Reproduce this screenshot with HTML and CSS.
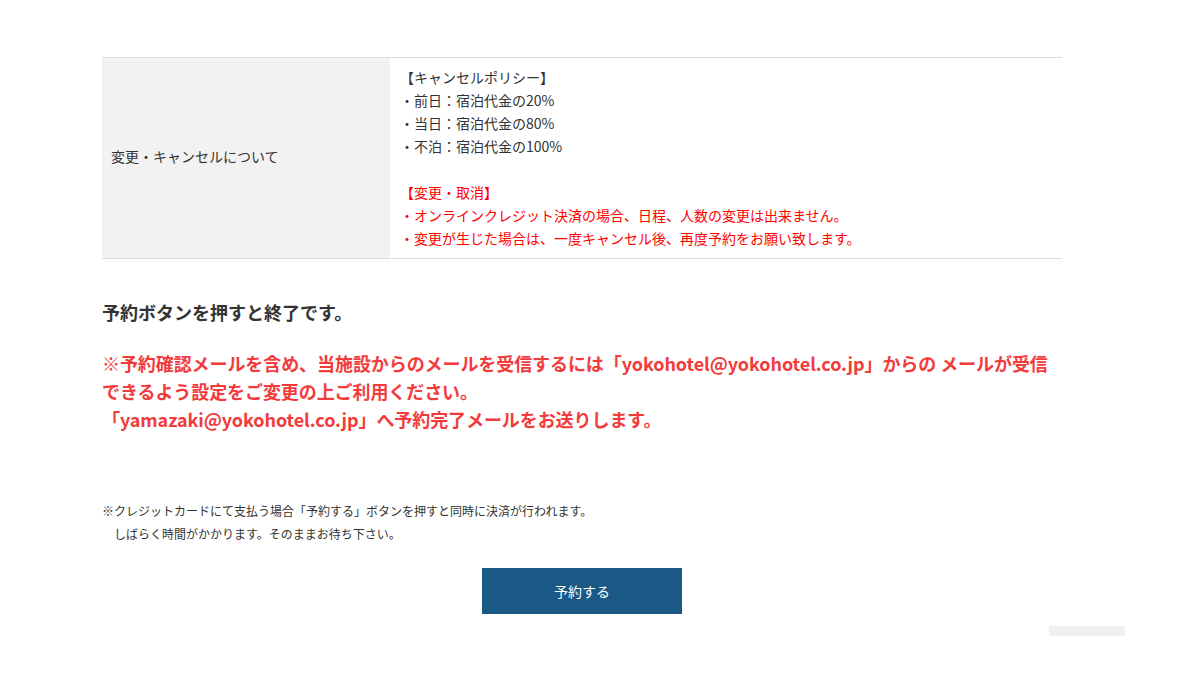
FILE: index.html
```html
<!DOCTYPE html>
<html lang="ja">
<head>
  <meta charset="UTF-8" />
  <meta name="viewport" content="width=device-width, initial-scale=1.0"/>
  <title>予約内容の確認</title>
  <link rel="stylesheet" href="styles.css">
</head>
<body>
  <div class="wrap">
    <!-- キャンセルポリシー -->
    <table class="policy">
      <tr>
        <th>変更・キャンセルについて</th>
        <td>
          【キャンセルポリシー】<br>
          ・前日：宿泊代金の20%<br>
          ・当日：宿泊代金の80%<br>
          ・不泊：宿泊代金の100%<br>
          <br>
          <span class="red">【変更・取消】<br>
          ・オンラインクレジット決済の場合、日程、人数の変更は出来ません。<br>
          ・変更が生じた場合は、一度キャンセル後、再度予約をお願い致します。</span>
        </td>
      </tr>
    </table>

    <p class="lead">予約ボタンを押すと終了です。</p>

    <p class="alert">※予約確認メールを含め、当施設からのメールを受信するには「yokohotel@yokohotel.co.jp」からの メールが受信<br>できるよう設定をご変更の上ご利用ください。<br>「yamazaki@yokohotel.co.jp」へ予約完了メールをお送りします。</p>

    <p class="note">※クレジットカードにて支払う場合「予約する」ボタンを押すと同時に決済が行われます。<br>　しばらく時間がかかります。そのままお待ち下さい。</p>

    <div class="btn-area">
      <button type="submit" class="btn-reserve">予約する</button>
    </div>
  </div>

  <!-- ページトップ -->
  <a href="#" class="pagetop"></a>
</body>
</html>
```

FILE: styles.css
```css
* {
  box-sizing: border-box;
  margin: 0;
  padding: 0;
}

body {
  font-family: "Noto Sans CJK JP", "Noto Sans", sans-serif;
  color: #333;
  background: #fff;
  height: 680px;
  overflow: hidden;
  position: relative;
}

.wrap {
  width: 960px;
  margin-left: 102px;
  padding-top: 57px;
}

/********** テーブル **********/
.policy {
  width: 100%;
  border-collapse: collapse;
  font-size: 14px;
  line-height: 23px;
}

.policy th,
.policy td {
  border-top: 1px solid #ddd;
  border-bottom: 1px solid #ddd;
  text-align: left;
  font-weight: normal;
  vertical-align: middle;
}

.policy th {
  width: 288px;
  background: #f2f2f2;
  padding: 6px 9px 10px;
}

.policy td {
  padding: 8px 10px;
}

.red {
  color: #f00;
}

/********** メッセージ **********/
.lead {
  margin-top: 40px;
  font-size: 18px;
  font-weight: bold;
  line-height: 26px;
}

.alert {
  margin-top: 24px;
  font-size: 18px;
  font-weight: bold;
  line-height: 28px;
  color: #f33b3b;
  white-space: nowrap;
  letter-spacing: -0.08px;
}

.note {
  margin-top: 66px;
  font-size: 12px;
  line-height: 23px;
}

/********** ボタン **********/
.btn-area {
  margin-top: 23px;
  text-align: center;
}

.btn-reserve {
  width: 200px;
  height: 46px;
  background: #1a5986;
  border: none;
  color: #fff;
  font-family: inherit;
  font-size: 14px;
  cursor: pointer;
}

.btn-reserve:hover {
  background: #144a70;
}

.pagetop {
  position: absolute;
  left: 1049px;
  top: 626px;
  width: 76px;
  height: 10px;
  background: #f0f0f0;
}
```
